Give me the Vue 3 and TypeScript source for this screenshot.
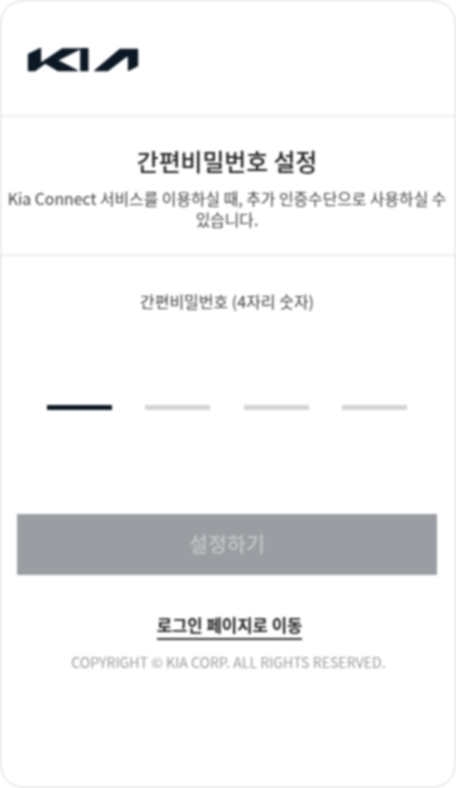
<script setup lang="ts">
const dashes = [true, false, false, false]
</script>

<template>
  <div class="frame">
    <header class="brand">
      <svg class="logo" viewBox="80 143 335 75" aria-label="KIA">
        <path d="M84 214V165L120 147V193L185 149H238L170 183L230 214H173L134 191L103 214Z" />
        <path d="M241 148H262V214H241Z" />
        <path d="M283 214L359 150H411V199L384 213V166L321 214Z" />
      </svg>
    </header>
    <section class="intro">
      <h1>간편비밀번호 설정</h1>
      <p>Kia Connect 서비스를 이용하실 때, 추가 인증수단으로 사용하실 수 있습니다.</p>
    </section>
    <main class="form">
      <label class="label">간편비밀번호 (4자리 숫자)</label>
      <div class="dashes">
        <span v-for="(active, i) in dashes" :key="i" class="dash" :class="{ active }"></span>
      </div>
      <button class="submit" type="button" disabled>설정하기</button>
      <a class="link" href="#">로그인 페이지로 이동</a>
      <small class="copy">COPYRIGHT © KIA CORP. ALL RIGHTS RESERVED.</small>
    </main>
  </div>
</template>

<style>
html, body { margin: 0; background: #fff; }
</style>

<style scoped>
.frame {
  width: 456px;
  height: 788px;
  box-sizing: border-box;
  border: 1px solid #d2d2d2;
  border-radius: 24px;
  background: #fff;
  overflow: hidden;
  display: flex;
  flex-direction: column;
  font-family: "Noto Sans CJK KR", "Noto Sans", sans-serif;
  color: #222;
  filter: blur(0.8px);
}
.brand {
  height: 116px;
  box-sizing: border-box;
  padding: 46px 0 0 26px;
  border-bottom: 2px solid #eeeeee;
}
.logo {
  display: block;
  width: 112px;
  height: 25px;
  fill: #0c1824;
  stroke: #0c1824;
  stroke-width: 4;
  stroke-linejoin: round;
}
.intro {
  height: 139px;
  box-sizing: border-box;
  padding: 29px 2px 0 0;
  border-bottom: 2px solid #eeeeee;
  text-align: center;
}
h1 {
  margin: 0;
  font-size: 23.8px;
  line-height: 30px;
  font-weight: 500;
  color: #222;
}
.intro p {
  margin: 12px 0 0;
  padding: 0;
  font-size: 15.85px;
  line-height: 21px;
  color: #3c3c3c;
}
.form {
  display: flex;
  flex-direction: column;
  align-items: center;
  padding-right: 2px;
}
.label {
  margin-top: 35px;
  font-size: 16px;
  line-height: 20px;
  color: #3c3c3c;
}
.dashes {
  margin-top: 94px;
  width: 360px;
  display: flex;
  justify-content: space-between;
}
.dash { width: 65px; height: 5px; background: #d4d4d4; }
.dash.active { background: #0c1824; }
.submit {
  margin-top: 104px;
  width: 420px;
  height: 61px;
  border: 0;
  background: #9a9ea2;
  color: #c3c6c9;
  font: 500 20.6px/58px "Noto Sans CJK KR", sans-serif;
  padding: 0 0 3px;
}
.link {
  margin: 40px 0 0 5px;
  padding-bottom: 3px;
  border-bottom: 2px solid #333;
  font-size: 16.7px;
  line-height: 20px;
  font-weight: 700;
  color: #222;
  text-decoration: none;
}
.copy {
  margin: 13px 0 0 3px;
  font-size: 14.1px;
  line-height: 18px;
  color: #999;
}
</style>
